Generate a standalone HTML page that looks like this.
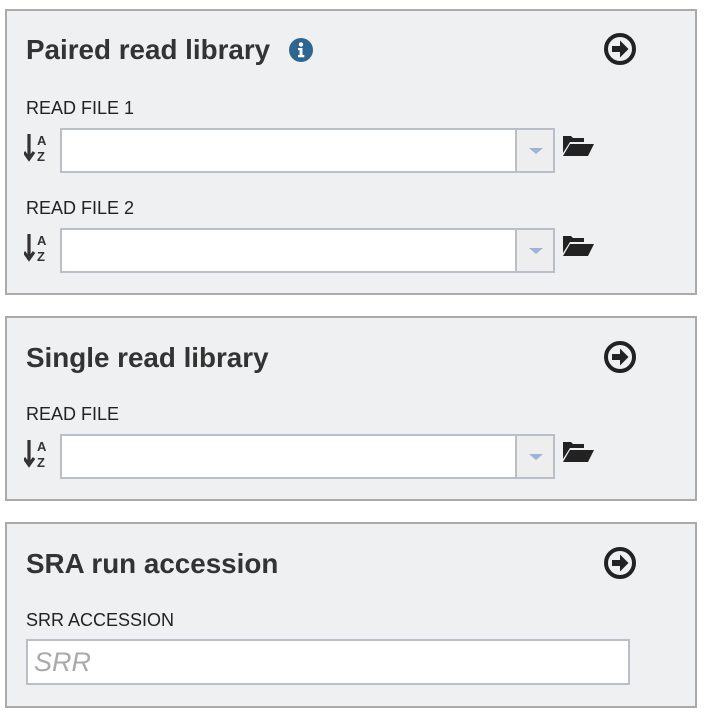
<!DOCTYPE html>
<html><head><style>
*{box-sizing:border-box;margin:0;padding:0}
body{width:706px;height:718px;background:#fff;font-family:"Liberation Sans",sans-serif;position:relative;overflow:hidden}
.p{position:absolute;left:5px;width:692px;background:#eff0f2;border:2px solid #aaa}
.h{position:absolute;left:26px;font-size:27.8px;font-weight:bold;color:#333}
.l{position:absolute;left:26px;font-size:18px;color:#222}
.in{position:absolute;left:60px;width:495px;height:45px;background:#fff;border:2px solid #b9bec8}
.dd{position:absolute;right:0;top:0;width:38px;height:41px;background:#eee;border-left:2px solid #b9bec8}
.dd:after{content:"";position:absolute;left:12px;top:18px;border-left:7px solid transparent;border-right:7px solid transparent;border-top:6px solid #9db3d6}
.s,.f,.g{position:absolute}
</style></head><body>
<div class="p" style="top:9px;height:286px"></div>
<div class="p" style="top:316px;height:185px"></div>
<div class="p" style="top:522px;height:186px"></div>

<div class="h" style="top:34px">Paired read library</div>
<svg class="g" style="left:288px;top:37px" width="26" height="26" viewBox="0 0 26 26"><circle cx="13" cy="13" r="12" fill="#2f6690"/><circle cx="13" cy="7.5" r="2.2" fill="#fff"/><path d="M10 11h4.5v7h1.8v2.2h-6.3v-2.2h1.6v-4.8h-1.6z" fill="#fff"/></svg>

<div class="h" style="top:342px">Single read library</div>
<div class="h" style="top:548px">SRA run accession</div>

<svg class="g" style="left:603px;top:32px" width="34" height="34" viewBox="0 0 34 34"><circle cx="17" cy="17" r="14" fill="none" stroke="#222" stroke-width="4"/><path d="M9 14h8v-5.5l8.5 8.5-8.5 8.5v-5.5H9z" fill="#222"/></svg>
<svg class="g" style="left:603px;top:340px" width="34" height="34" viewBox="0 0 34 34"><circle cx="17" cy="17" r="14" fill="none" stroke="#222" stroke-width="4"/><path d="M9 14h8v-5.5l8.5 8.5-8.5 8.5v-5.5H9z" fill="#222"/></svg>
<svg class="g" style="left:603px;top:546px" width="34" height="34" viewBox="0 0 34 34"><circle cx="17" cy="17" r="14" fill="none" stroke="#222" stroke-width="4"/><path d="M9 14h8v-5.5l8.5 8.5-8.5 8.5v-5.5H9z" fill="#222"/></svg>

<div class="l" style="top:98px">READ FILE 1</div>
<div class="l" style="top:198px">READ FILE 2</div>
<div class="l" style="top:404px">READ FILE</div>
<div class="l" style="top:610px">SRR ACCESSION</div>

<div class="in" style="top:128px"><div class="dd"></div></div>
<div class="in" style="top:228px"><div class="dd"></div></div>
<div class="in" style="top:434px"><div class="dd"></div></div>

<div style="position:absolute;left:26px;top:639px;width:604px;height:46px;background:#fff;border:2px solid #b9bec8;font-size:27px;font-style:italic;color:#aaa;padding:6px 0 0 6px">SRR</div>

<svg class="s" style="left:24px;top:132px" width="28" height="32" viewBox="0 0 28 32"><path d="M5 2v22M0 20l5 7 5-7" stroke="#333" stroke-width="3.2" fill="none"/><text x="13" y="13" font-size="13" font-weight="bold" fill="#333" font-family="Liberation Sans">A</text><text x="13" y="29" font-size="13" font-weight="bold" fill="#333" font-family="Liberation Sans">Z</text></svg>
<svg class="s" style="left:24px;top:232px" width="28" height="32" viewBox="0 0 28 32"><path d="M5 2v22M0 20l5 7 5-7" stroke="#333" stroke-width="3.2" fill="none"/><text x="13" y="13" font-size="13" font-weight="bold" fill="#333" font-family="Liberation Sans">A</text><text x="13" y="29" font-size="13" font-weight="bold" fill="#333" font-family="Liberation Sans">Z</text></svg>
<svg class="s" style="left:24px;top:438px" width="28" height="32" viewBox="0 0 28 32"><path d="M5 2v22M0 20l5 7 5-7" stroke="#333" stroke-width="3.2" fill="none"/><text x="13" y="13" font-size="13" font-weight="bold" fill="#333" font-family="Liberation Sans">A</text><text x="13" y="29" font-size="13" font-weight="bold" fill="#333" font-family="Liberation Sans">Z</text></svg>

<svg class="f" style="left:562px;top:133px" width="32" height="24" viewBox="0 0 32 24"><path d="M1 3h8l2 2h11v4H8L1 20z" fill="#222"/><path d="M8 11h24l-6 12H1z" fill="#222"/></svg>
<svg class="f" style="left:562px;top:233px" width="32" height="24" viewBox="0 0 32 24"><path d="M1 3h8l2 2h11v4H8L1 20z" fill="#222"/><path d="M8 11h24l-6 12H1z" fill="#222"/></svg>
<svg class="f" style="left:562px;top:439px" width="32" height="24" viewBox="0 0 32 24"><path d="M1 3h8l2 2h11v4H8L1 20z" fill="#222"/><path d="M8 11h24l-6 12H1z" fill="#222"/></svg>
</body></html>
